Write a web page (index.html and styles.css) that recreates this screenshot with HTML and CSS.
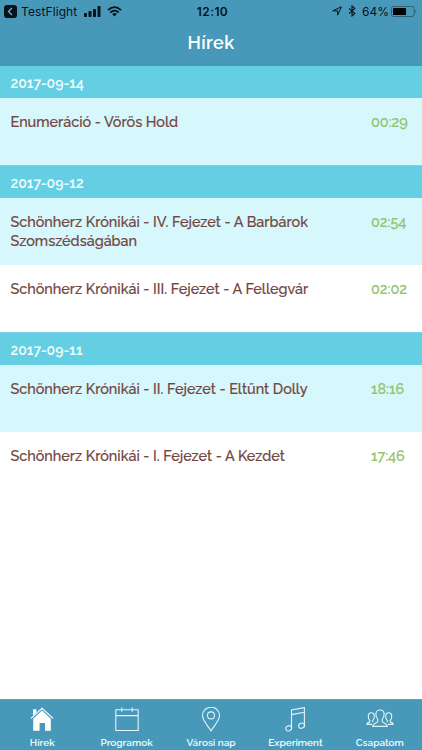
FILE: index.html
```html
<!DOCTYPE html>
<html lang="hu">
<head>
  <meta charset="UTF-8" />
  <meta name="viewport" content="width=device-width, initial-scale=1.0"/>
  <title>Hírek</title>
  <link rel="stylesheet" href="styles.css">
</head>
<body>
  <header class="navbar">
    <div class="status">
      <div class="status-left">
        <svg class="back" width="13" height="13" viewBox="0 0 13 13"><rect width="13" height="13" rx="3" fill="#06131a"/><path d="M8 3L4.5 6.5L8 10" fill="none" stroke="#72b4cd" stroke-width="1.3"/></svg>
        <span class="app">TestFlight</span>
        <svg class="signal" width="17" height="11" viewBox="0 0 17 11"><rect y="7" width="3" height="4" rx=".7"/><rect x="4.5" y="5" width="3" height="6" rx=".7"/><rect x="9" y="3" width="3" height="8" rx=".7"/><rect x="13.5" y="0" width="3" height="11" rx=".7"/></svg>
        <svg class="wifi" width="15" height="11" viewBox="0 0 15 11"><path d="M1 4.2Q7.5 -1.9 14 4.2M3.3 6.5Q7.5 2.7 11.7 6.5" fill="none" stroke="#06131a" stroke-width="1.8"/><path d="M5.1 8.1Q7.5 6 9.9 8.1L7.5 10.6Z"/></svg>
      </div>
      <div class="clock">12:10</div>
      <div class="status-right">
        <svg class="location" width="10" height="10" viewBox="0 0 10 10"><path d="M9.3 .8L5.6 9.2V4.8H.8Z" fill="none" stroke="#06131a" stroke-width="1"/></svg>
        <svg class="bluetooth" width="8" height="12" viewBox="0 0 8 12"><path d="M1 3.3L6.8 8.6L4 11V1L6.8 3.4L1 8.7" fill="none" stroke="#06131a" stroke-width="1.1"/></svg>
        <span class="percent">64%</span>
        <svg class="battery" width="26" height="11" viewBox="0 0 26 11"><rect x=".5" y=".5" width="22.6" height="10" rx="2" fill="none" stroke="#2b5b6f" stroke-width=".9"/><rect x="2" y="2" width="13" height="7" rx=".6" fill="#000"/><path d="M24.4 3.8Q26.2 5.5 24.4 7.2Z" fill="#2b5b6f"/></svg>
      </div>
    </div>
    <h1>Hírek</h1>
  </header>

  <main class="news">
    <section class="day">
      <h2>2017-09-14</h2>
      <article class="item">
        <p class="title">Enumeráció - Vörös Hold</p>
        <time>00:29</time>
      </article>
    </section>
    <section class="day">
      <h2>2017-09-12</h2>
      <article class="item">
        <p class="title">Schönherz Krónikái - IV. Fejezet - A Barbárok Szomszédságában</p>
        <time>02:54</time>
      </article>
      <article class="item">
        <p class="title">Schönherz Krónikái - III. Fejezet - A Fellegvár</p>
        <time>02:02</time>
      </article>
    </section>
    <section class="day">
      <h2>2017-09-11</h2>
      <article class="item">
        <p class="title">Schönherz Krónikái - II. Fejezet - Eltűnt Dolly</p>
        <time>18:16</time>
      </article>
      <article class="item">
        <p class="title">Schönherz Krónikái - I. Fejezet - A Kezdet</p>
        <time>17:46</time>
      </article>
    </section>
  </main>

  <nav class="tabs">
    <a class="tab active">
      <svg width="24" height="26" viewBox="0 0 24 26"><path d="M3.2 11.7L12 3.6L20.8 11.7V23.7H15V16H9.6V23.7H3.2Z" fill="#fff"/><path d="M1 11.4L12 1.2L23 11.4" fill="none" stroke="#fff" stroke-width="1.2"/><path d="M3 2.2H6.4V5.4L3 8.5Z" fill="#fff"/></svg>
      <span>Hírek</span>
    </a>
    <a class="tab">
      <svg width="24" height="26" viewBox="0 0 24 26"><path d="M.8 2.8H23.2V23.5H.8ZM.8 8.6H23.2M6.8 .6V4.8M17.2 .6V4.8"/></svg>
      <span>Programok</span>
    </a>
    <a class="tab">
      <svg width="24" height="26" viewBox="0 0 24 26"><path d="M12 23.8C9.5 19.5 3.5 13.8 3.5 8.6A8.5 8.4 0 0 1 20.5 8.6C20.5 13.8 14.5 19.5 12 23.8Z"/><circle cx="12" cy="8.4" r="3.5"/></svg>
      <span>Városi nap</span>
    </a>
    <a class="tab">
      <svg width="24" height="26" viewBox="0 0 24 26"><path d="M8.5 21V3L21.4 .6V18.4M8.5 7.6L21.4 5.2"/><ellipse cx="5.7" cy="21.3" rx="3" ry="2.5" transform="rotate(-20 5.7 21.3)"/><ellipse cx="18.6" cy="18.7" rx="3" ry="2.5" transform="rotate(-20 18.6 18.7)"/></svg>
      <span>Experiment</span>
    </a>
    <a class="tab">
      <svg width="28" height="26" viewBox="0 0 28 26"><path d="M11.8 14.4V12.4C10 10.9 9.9 8.4 9.9 7C9.9 4.6 11.6 3 14 3S18.1 4.6 18.1 7C18.1 8.4 18 10.9 16.2 12.4V14.4C17.2 16.4 20.8 15.6 21.3 19.4H6.7C7.2 15.6 10.8 16.4 11.8 14.4Z"/><path d="M6.8 15.2V13.5C8 12.5 8.3 11 8.3 9.2C8.3 7 7.2 5.7 5.3 5.7S2.3 7 2.3 9.2C2.3 11 2.7 12.5 3.8 13.5V14.8C3.5 15.6 .9 15.2 .8 17.4H6.3M21.2 15.2V13.5C20 12.5 19.7 11 19.7 9.2C19.7 7 20.8 5.7 22.7 5.7S25.7 7 25.7 9.2C25.7 11 25.3 12.5 24.2 13.5V14.8C24.5 15.6 27.1 15.2 27.2 17.4H21.7"/></svg>
      <span>Csapatom</span>
    </a>
  </nav>
</body>
</html>
```
FILE: styles.css
```css
* {
  margin: 0;
  padding: 0;
  box-sizing: border-box;
}

body {
  height: 100vh;
  display: flex;
  flex-direction: column;
  background: #fff;
  font-family: Raleway, Lato, sans-serif;
  overflow: hidden;
}

.navbar {
  height: 66px;
  background: #4899b9;
  color: #fff;
}

.status {
  display: grid;
  grid-template-columns: 1fr auto 1fr;
  align-items: center;
  height: 22px;
  padding: 0 5px 0 4px;
  color: #06131a;
  fill: #06131a;
  font-family: Inter, sans-serif;
  font-size: 12px;
}

.status-left,
.status-right {
  display: flex;
  align-items: center;
}

.status-right {
  justify-content: flex-end;
}

.app {
  margin-left: 4px;
  letter-spacing: 0.1px;
}

.signal {
  margin-left: 7px;
}

.wifi {
  margin-left: 6px;
}

.clock {
  padding-left: 4px;
  font-weight: 600;
  letter-spacing: 0.4px;
}

.bluetooth {
  margin-left: 6px;
}

.percent {
  margin: 0 2px 0 6px;
}

h1 {
  height: 42px;
  line-height: 42px;
  text-align: center;
  font-size: 18px;
  font-weight: 600;
  letter-spacing: 0.4px;
}

.news {
  flex: 1;
}

h2 {
  height: 32px;
  padding: 0 10.5px;
  line-height: 35px;
  background: #64cfe3;
  color: #effdff;
  font-size: 14px;
  font-weight: 600;
}

.day + .day h2 {
  height: 33px;
  border-top: 1px solid #78d5e6;
}

.item {
  display: flex;
  height: 67px;
  padding: 15px 10px 0 10.5px;
  line-height: 18.5px;
  font-size: 14.4px;
  font-weight: 500;
  -webkit-text-stroke: 0.2px;
}

.item:nth-of-type(odd) {
  background: #d6f8fd;
}

.title {
  width: 360.5px;
  padding-right: 50px;
  color: #74463f;
}

time {
  color: #91c46c;
}

.tabs {
  display: flex;
  height: 51px;
  background: #4899b9;
  border-top: 1px solid #6c9fb3;
}

.tab {
  flex: 1;
  display: flex;
  flex-direction: column;
  align-items: center;
  color: #eefaff;
  font-size: 10px;
  font-weight: 600;
}

.tab svg {
  margin-top: 7px;
  fill: none;
  stroke: #e0f5fc;
  stroke-width: 1.1;
}

.tab.active svg {
  stroke: none;
}

.tab span {
  line-height: 12px;
  margin-top: 4px;
}
```
